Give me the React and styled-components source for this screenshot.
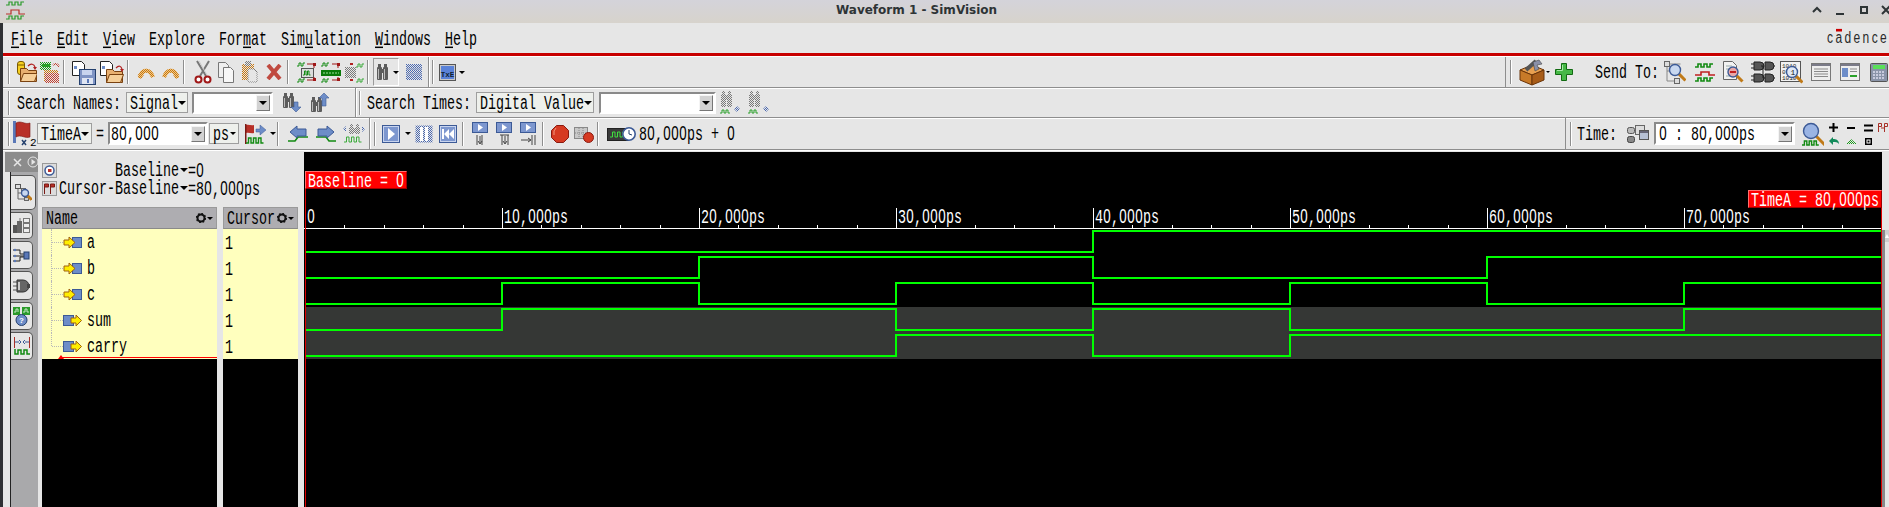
import React from "react";
import styled, { createGlobalStyle } from "styled-components";

const GlobalStyle = createGlobalStyle`
  html, body { margin: 0; padding: 0; background: #000; overflow: hidden; }
  * { box-sizing: border-box; }
`;

const Page = styled.div`
  width: 1889px;
  height: 507px;
  display: flex;
  flex-direction: column;
  overflow: hidden;
  font-family: "Liberation Mono", monospace;
  color: #000;
`;

const TitleBar = styled.div`
  height: 23px;
  flex: none;
  display: flex;
  align-items: center;
  padding: 0 0 3px 6px;
  background: linear-gradient(#d4d3da, #d7d3cc);
`;

const Title = styled.div`
  margin-left: 811px;
  font: bold 12px "DejaVu Sans", sans-serif;
  color: #2e3436;
  white-space: nowrap;
`;

const WinButtons = styled.div`
  margin-left: auto;
  margin-right: -2px;
  display: flex;
  align-items: center;
`;

const Body = styled.div`
  flex: 1;
  min-height: 0;
  display: flex;
  flex-direction: column;
  background: #e6e6e6;
  border-left: 3px solid #2f3034;
`;

const MenuBar = styled.div`
  height: 30px;
  flex: none;
  display: flex;
  align-items: center;
  padding-left: 1px;
`;

const MenuItem = styled.div`
  padding: 0 7px;
  u { text-underline-offset: 1px; text-decoration-thickness: 1px; }
`;

const Logo = styled.div`
  margin-left: auto;
  position: relative;
  width: 62px;
  font: 12px "Liberation Sans", sans-serif;
  letter-spacing: 2.4px;
  color: #2a2a2a;
  white-space: nowrap;
  transform: scaleY(1.3);
`;

const Macron = styled.span`
  position: absolute;
  left: 9px;
  top: 0;
  width: 6px;
  height: 1.5px;
  background: #c00;
`;

const RedRule = styled.div`
  height: 4px;
  flex: none;
  background: #c80000;
  border-bottom: 1px solid #fff;
`;

const ToolRow = styled.div`
  height: ${(p) => p.$h}px;
  flex: none;
  display: flex;
  align-items: center;
  border-bottom: 1px solid #8e8e8e;
  box-shadow: 0 1px 0 #fff;
`;

const Section = styled.div`
  display: flex;
  align-items: center;
  height: 100%;
  flex: none;
  width: ${(p) => p.$w}px;
  border-right: 1px solid #8e8e8e;
  box-shadow: 1px 0 0 #fff;
`;

const RightSection = styled.div`
  display: flex;
  align-items: center;
  height: 100%;
  flex: none;
  margin-left: auto;
  width: ${(p) => p.$w}px;
  border-left: 1px solid #8e8e8e;
`;

const Slot = styled.div`
  flex: none;
  display: flex;
  align-items: center;
  justify-content: center;
  margin-left: ${(p) => p.$ml || 0}px;
  width: ${(p) => (p.$w ? `${p.$w}px` : "auto")};
`;

const Sep = styled.div`
  flex: none;
  margin-left: ${(p) => p.$ml || 0}px;
  width: 2px;
  height: 24px;
  border-left: 1px solid #8e8e8e;
  border-right: 1px solid #fff;
`;

const ActiveButton = styled.div`
  flex: none;
  display: flex;
  align-items: center;
  gap: 1px;
  margin-left: ${(p) => p.$ml || 0}px;
  width: 26px;
  height: 28px;
  padding-left: 3px;
  border: 1px solid;
  border-color: #9a9a9a #fff #fff #9a9a9a;
`;

const Combo = styled.div`
  flex: none;
  display: flex;
  align-items: center;
  justify-content: space-between;
  margin-left: ${(p) => p.$ml || 0}px;
  width: ${(p) => p.$w}px;
  height: 21px;
  padding: 0 2px 0 3px;
  background: #eef0ec;
  border: 1px solid #9e9e9e;
`;

const EditBox = styled.div`
  flex: none;
  display: flex;
  align-items: center;
  margin-left: ${(p) => p.$ml || 0}px;
  width: ${(p) => p.$w}px;
  height: ${(p) => p.$hgt || 22}px;
  padding-left: 1px;
  background: #fff;
  border-style: solid;
  border-width: 2px;
  border-color: #8a8a8a #fff #fff #8a8a8a;
`;

const DropButton = styled.div`
  margin-left: auto;
  width: 14px;
  height: 16px;
  margin-right: 1px;
  display: flex;
  align-items: center;
  justify-content: center;
  background: #d2d2d2;
  border-style: solid;
  border-width: 1px;
  border-color: #f4f4f4 #777 #777 #f4f4f4;
`;

const Caret = styled.span`
  flex: none;
  display: block;
  margin-left: ${(p) => p.$ml || 0}px;
  width: 0;
  height: 0;
  border-left: ${(p) => p.$s || 4}px solid transparent;
  border-right: ${(p) => p.$s || 4}px solid transparent;
  border-top: ${(p) => p.$s || 4}px solid #000;
`;

const TallText = styled.span`
  display: inline-block;
  flex: none;
  white-space: pre;
  line-height: 1;
  font-family: "Liberation Mono", monospace;
  font-size: 13.33px;
  transform: translateY(1.5px) scaleY(1.48);
  color: ${(p) => p.$color || "inherit"};
  margin-left: ${(p) => p.$ml || 0}px;
`;

const Zero = styled.span`
  display: inline-block;
  width: 0.6em;
  text-align: center;
  font-family: "Liberation Sans", sans-serif;
  font-weight: 400;
`;

// Liberation Mono has a dotted zero, the reference font does not
const Tall = ({ text, color, ml }) => (
  <TallText $color={color} $ml={ml}>
    {[...text].map((c, i) => (c === "0" ? <Zero key={i}>0</Zero> : c))}
  </TallText>
);

const Workspace = styled.div`
  flex: 1;
  min-height: 0;
  display: flex;
  padding-top: 2px;
`;

const SideRail = styled.div`
  flex: none;
  width: 33px;
  margin-left: 2px;
  margin-right: 4px;
  display: flex;
  flex-direction: column;
`;

const CloseBar = styled.div`
  height: 20px;
  flex: none;
  display: flex;
  align-items: center;
  gap: 5px;
  padding-left: 8px;
  background: #8c8c8c;
`;

const TabStrip = styled.div`
  flex: 1;
  margin-left: 5px;
  padding-top: 3px;
  display: flex;
  flex-direction: column;
  gap: 2px;
  background: #a9a9ab;
  border-left: 1px solid #222;
`;

const Tab = styled.div`
  height: ${(p) => p.$h}px;
  width: ${(p) => (p.$active ? 25 : 22)}px;
  flex: none;
  display: flex;
  align-items: center;
  justify-content: center;
  background: #e6e6e6;
  border: 1px solid #555;
  border-left: none;
  border-bottom-right-radius: 5px;
  border-top-right-radius: 5px;
`;

const SignalPanel = styled.div`
  flex: none;
  width: ${(p) => p.$w}px;
  margin-right: 6px;
  display: flex;
  flex-direction: column;
`;

const BaselineBox = styled.div`
  height: 55px;
  flex: none;
  padding-top: 9px;
  display: grid;
  grid-template-columns: 17px 120px auto auto;
  grid-auto-rows: 18px;
  align-items: center;
`;

const BaselineLabel = styled.div`
  display: flex;
  justify-content: flex-end;
`;

const BaselineValue = styled.div`
  display: flex;
  align-items: center;
  white-space: pre;
`;

const ColumnHeader = styled.div`
  height: 22px;
  flex: none;
  display: flex;
  align-items: center;
  padding: 0 3px;
  background: #aeadb1;
  border: 1px solid #9a9a9a;
  border-bottom-color: #8a8a8a;
`;

const HeaderTools = styled.div`
  margin-left: auto;
  display: flex;
  align-items: center;
  gap: 1px;
`;

const RowList = styled.div`
  height: 130px;
  flex: none;
  position: relative;
  background: #ffffbe;
`;

const SignalRow = styled.div`
  height: 26px;
  display: flex;
  align-items: center;
`;

const Branch = styled.div`
  flex: none;
  align-self: flex-start;
  margin-left: 9px;
  width: 12px;
  height: ${(p) => (p.$last ? 13 : 26)}px;
  border-left: 1px dotted #b8b8b8;
  position: relative;
  &::after {
    content: "";
    position: absolute;
    left: 0;
    top: 13px;
    width: 11px;
    border-top: 1px dotted #b8b8b8;
  }
`;

const ValueCell = styled.div`
  padding-left: 2px;
`;

const CursorLine = styled.div`
  position: absolute;
  left: 18px;
  right: 0;
  bottom: 1px;
  height: 1px;
  background: #f00;
  &::before {
    content: "";
    position: absolute;
    left: -2px;
    bottom: -1px;
    border-left: 3px solid transparent;
    border-right: 3px solid transparent;
    border-bottom: 4px solid #f00;
  }
`;

const BlackFill = styled.div`
  flex: 1;
  background: #000;
`;

const WaveCanvas = styled.div`
  flex: none;
  width: 1578px;
  position: relative;
  background: #000;
`;

const WaveSvg = styled.svg`
  display: block;
  width: 100%;
  height: 100%;
`;

const TimeLabel = styled.div`
  position: absolute;
  top: 56px;
  left: ${(p) => p.$x}px;
  color: #fff;
  line-height: 16px;
`;

const Flag = styled.div`
  position: absolute;
  top: ${(p) => p.$top}px;
  left: ${(p) => p.$left}px;
  width: ${(p) => p.$w}px;
  height: 18px;
  display: flex;
  align-items: center;
  padding-left: 2px;
  background: #f00;
  border: 1px solid;
  border-color: #ff7070 #a00000 #a00000 #ff7070;
`;

const ScrollColumn = styled.div`
  flex: 1;
  margin-top: 78px;
  border-left: 3px solid #8a8a8a;
`;

const ScrollHead = styled.div`
  height: 12px;
  display: flex;
  align-items: center;
  justify-content: center;
  background: #cfcfcf;
`;

const ScrollUp = styled.span`
  width: 0;
  height: 0;
  border-left: 2px solid transparent;
  border-right: 2px solid transparent;
  border-bottom: 4px solid #fff;
`;

const IconSvg = styled.svg`
  display: block;
  flex: none;
`;

const Defs = styled.svg`
  position: absolute;
  width: 0;
  height: 0;
`;

const Ico = ({ w, h, children }) => (
  <IconSvg width={w} height={h} viewBox={`0 0 ${w} ${h}`}>
    {children}
  </IconSvg>
);

const DITHERS = {
  dOrange: "#c87810",
  dGrey: "#7a7a7a",
  dGreen: "#1a9a1a",
  dBlue: "#4a68b0",
  dRed: "#c04030",
};

const DitherDefs = () => (
  <Defs>
    <defs>
      {Object.entries(DITHERS).map(([id, color]) => (
        <pattern key={id} id={id} width="2" height="2" patternUnits="userSpaceOnUse">
          <rect width="1" height="1" fill={color} />
          <rect x="1" y="1" width="1" height="1" fill={color} />
        </pattern>
      ))}
    </defs>
  </Defs>
);

const squareWave = (x, y, n, w, h) => {
  let d = `M${x} ${y}`;
  for (let i = 0; i < n; i++) d += `h${w}v${i % 2 ? h : -h}`;
  return d + `h${w}`;
};

const Wave = ({ x, y, n = 4, w = 2, h = 3, color = "#128a12", sw = 1 }) => (
  <path d={squareWave(x, y, n, w, h)} fill="none" stroke={color} strokeWidth={sw} />
);

const Folder = ({ x = 0, y = 0 }) => (
  <g transform={`translate(${x} ${y})`}>
    <path d="M.5 2.5h6l2 2h8v11H.5z" fill="#e8b070" stroke="#7a4210" />
    <path d="M.5 15.5l3-8h14l-3 8z" fill="#f6cf98" stroke="#7a4210" />
  </g>
);

const Page2 = ({ x = 0, y = 0, w = 12, h = 14, dot = "#6d8dc8" }) => (
  <g transform={`translate(${x} ${y})`}>
    <path d={`M.5 .5h${w - 4}l3 3v${h - 3}h-${w - 1}z`} fill="#fff" stroke="#222" />
    <rect x="2" y="5" width="3" height="3" fill={dot} />
  </g>
);

const Lens = ({ x, y, r = 5, fill = "#c8d8f0" }) => (
  <g>
    <line x1={x + r * 0.7} y1={y + r * 0.7} x2={x + r * 1.9} y2={y + r * 1.9} stroke="#c07a18" strokeWidth="3" />
    <circle cx={x} cy={y} r={r} fill={fill} stroke="#3c5a96" strokeWidth="1.4" />
  </g>
);

const Binoc = ({ x = 0, y = 0, fill = "#5c5c5c", h = 15 }) => (
  <g transform={`translate(${x} ${y})`}>
    <rect x="1" y="0" width="3" height="4" fill={fill} />
    <rect x="7" y="0" width="3" height="4" fill={fill} />
    <rect x="0" y="3" width="5" height={h - 3} rx="1" fill={fill} />
    <rect x="6" y="3" width="5" height={h - 3} rx="1" fill={fill} />
    <rect x="4" y="5" width="3" height="4" fill={fill} />
    {fill.startsWith("#") && <line x1="1.5" y1="5" x2="1.5" y2={h - 1} stroke="#bbb" />}
    {fill.startsWith("#") && <line x1="7.5" y1="5" x2="7.5" y2={h - 1} stroke="#bbb" />}
  </g>
);

const BlueBtn = ({ w = 18, h = 18, fill = "#7d97cf", children }) => (
  <Ico w={w} h={h}>
    <rect x=".5" y=".5" width={w - 1} height={h - 1} fill={fill} stroke={fill.startsWith("#") ? "#3c5a96" : "none"} />
    {fill.startsWith("#") && <rect x="1.5" y="1.5" width={w - 3} height={h - 3} fill="none" stroke="#c8d4ee" />}
    {children}
  </Ico>
);

const OpenDbIcon = () => (
  <Ico w={21} h={24}>
    <rect x="1.5" y="1.5" width="7" height="13" rx="2.5" fill="#f6d020" stroke="#7a5a00" />
    <line x1="2" y1="5" x2="8" y2="5" stroke="#7a5a00" />
    <Folder x={4} y={6} />
    <path d="M12 6c3-3 6-2 7 1" fill="none" stroke="#b02020" strokeWidth="1.2" />
    <path d="M17 7h4l-2 3z" fill="#b02020" />
  </Ico>
);

const OpenWaveIcon = () => (
  <Ico w={20} h={24}>
    <rect x="0" y="2" width="11" height="8" fill="url(#dGreen)" />
    <rect x="2" y="4" width="8" height="3" fill="#28a028" />
    <rect x="4" y="10" width="14" height="12" fill="url(#dOrange)" />
    <rect x="5" y="13" width="14" height="10" fill="url(#dRed)" />
    <path d="M13 5c3-2 5-1 6 2" fill="none" stroke="url(#dRed)" strokeWidth="2" />
  </Ico>
);

const SaveIcon = () => (
  <Ico w={24} h={25}>
    <Page2 x={0} y={1} w={13} h={14} />
    <rect x="7.5" y="9.5" width="16" height="15" fill="#7f94c4" stroke="#24406e" />
    <rect x="10" y="10" width="10" height="5" fill="#c8d4ee" />
    <rect x="10" y="18" width="11" height="6" fill="#dfe5f2" />
    <rect x="15" y="19" width="2" height="4" fill="#5a78b8" />
  </Ico>
);

const CopyFolderIcon = () => (
  <Ico w={24} h={25}>
    <Page2 x={0} y={1} w={13} h={14} />
    <g transform="translate(6 7)">
      <Folder />
    </g>
    <path d="M16 8c3-3 5-2 6 1" fill="none" stroke="#b02020" strokeWidth="1.2" />
    <path d="M20 9h4l-2 3z" fill="#b02020" />
  </Ico>
);

const UndoIcon = ({ flip }) => (
  <Ico w={18} h={15}>
    <g transform={flip ? "translate(18 0) scale(-1 1)" : undefined}>
      <path d="M3 13C4 5 12 2 16 12" fill="none" stroke="#f0c888" strokeWidth="4" />
      <path d="M3 13C4 5 12 2 16 12" fill="none" stroke="url(#dOrange)" strokeWidth="4" />
      <path d="M0 9l3 5 4-4z" fill="url(#dOrange)" />
    </g>
  </Ico>
);

const CutIcon = () => (
  <Ico w={18} h={24}>
    <path d="M3 1l9 15M15 1L6 16" fill="none" stroke="#777" strokeWidth="2" />
    <path d="M5 1l8 14" stroke="#ccc" fill="none" />
    <circle cx="4.5" cy="19.5" r="3" fill="#fff" stroke="#a01818" strokeWidth="2" />
    <circle cx="13.5" cy="19.5" r="3" fill="#fff" stroke="#a01818" strokeWidth="2" />
  </Ico>
);

const CopyIcon = () => (
  <Ico w={16} h={21}>
    <path d="M.5 .5h7l3 3v12H.5z" fill="#efefef" stroke="#777" />
    <path d="M5.5 5.5h7l3 3v12h-10z" fill="#f7f7f7" stroke="#777" />
  </Ico>
);

const PasteIcon = () => (
  <Ico w={16} h={22}>
    <rect x="0" y="3" width="12" height="16" fill="url(#dOrange)" />
    <rect x="3" y="0" width="6" height="5" fill="url(#dGrey)" />
    <path d="M6 8h6l3 3v10H6z" fill="#e6e6e6" stroke="url(#dGrey)" />
  </Ico>
);

const DeleteIcon = () => (
  <Ico w={16} h={16}>
    <path d="M2 1l12 14M14 1L2 15" stroke="#c04a40" strokeWidth="4" fill="none" />
  </Ico>
);

const WaveBoxIcon = () => (
  <Ico w={22} h={21}>
    <Wave x={1} y={4} n={3} />
    <Wave x={1} y={20} n={3} />
    <rect x="5.5" y="6.5" width="12" height="9" fill="#dcdcdc" stroke="#555" />
    <Wave x={7} y={13} n={4} w={1.5} h={4} />
    <path d="M11 2h7v4M11 18h7v-3" stroke="#a01818" fill="none" />
    <rect x="17" y="1" width="3" height="3" fill="#a01818" />
    <rect x="17" y="16" width="3" height="3" fill="#a01818" />
  </Ico>
);

const WaveBusIcon = () => (
  <Ico w={22} h={21}>
    <Wave x={1} y={4} n={3} />
    <Wave x={1} y={20} n={3} />
    <rect x="1" y="8" width="20" height="6" fill="#0a7a0a" />
    <path d="M3 11h16" stroke="#9ce09c" strokeDasharray="2 1" />
    <path d="M12 2h6v4M12 18h6v-3" stroke="#a01818" fill="none" />
    <rect x="17" y="1" width="3" height="3" fill="#a01818" />
    <rect x="17" y="16" width="3" height="3" fill="#a01818" />
  </Ico>
);

const WaveDimIcon = () => (
  <Ico w={20} h={21}>
    <rect x="1" y="5" width="11" height="11" fill="url(#dGrey)" />
    <path d="M6 2h3M6 18h3" stroke="#b02020" strokeWidth="2" />
    <Wave x={12} y={5} n={3} w={2} color="#3aaa3a" />
    <Wave x={12} y={20} n={3} w={2} color="#3aaa3a" />
  </Ico>
);

const FindIcon = () => (
  <Ico w={15} h={16}>
    <Binoc y={0} h={16} />
  </Ico>
);

const GridIcon = () => (
  <Ico w={16} h={16}>
    <rect width="16" height="16" fill="url(#dBlue)" />
    <path d="M0 5h16M0 10h16" stroke="#9aa8c8" />
  </Ico>
);

const TxEIcon = () => (
  <IconSvg width={17} height={17} viewBox="0 0 17 17">
    <rect x=".5" y=".5" width="16" height="16" fill="#c8c8c8" stroke="#555" />
    <rect x="2" y="2" width="13" height="13" fill="#5a82d8" />
    <text x="8.5" y="12.5" textAnchor="middle" fontSize="7.5" fontFamily="Liberation Mono" fontWeight="700" fill="#123">TxE</text>
  </IconSvg>
);

const BinocDownIcon = ({ up }) => (
  <Ico w={18} h={19}>
    <Binoc y={up ? 4 : 0} h={15} />
    <path d={up ? "M13 0l5 5h-3v8h-4V5H8z" : "M11 9h4v5h3l-5 5-5-5h3z"} fill="#6d8dc8" stroke="#3c5a96" strokeWidth=".6" />
  </Ico>
);

const BinocDimIcon = ({ flip }) => (
  <Ico w={22} h={24}>
    <Binoc x={1} fill="url(#dGrey)" h={16} />
    <Wave x={0} y={22} n={4} w={2} color="#2aa02a" />
    <path d={flip ? "M15 18l3 3 3-3-3-3z" : "M14 18l3 3 3-3-3-3z"} fill="url(#dBlue)" />
  </Ico>
);

const FlagIcon = () => (
  <IconSvg width={24} height={27} viewBox="0 0 24 27">
    <rect x="0" y="1" width="3" height="22" fill="#5a78b8" />
    <path d="M3 3c5-3 9 2 14 0v14c-5 2-9-3-14 0z" fill="#b83028" stroke="#7a1a14" strokeWidth=".6" />
    <path d="M9 20l4 5M13 20l-4 5" stroke="#24406e" strokeWidth="1.5" />
    <text x="17" y="26" fontSize="11" fontFamily="Liberation Mono" fill="#000">2</text>
  </IconSvg>
);

const MarkerWaveIcon = () => (
  <Ico w={23} h={22}>
    <path d="M2 2c3-1 5 1 8 0v8c-3 1-5-1-8 0z" fill="#b83028" />
    <rect x="1" y="1" width="1.5" height="20" fill="#7a1a14" />
    <path d="M12 6h4V2l6 5-6 5V9h-4z" fill="#6d8dc8" stroke="#3c5a96" strokeWidth=".5" />
    <Wave x={2} y={20} n={6} w={2.5} h={5} color="#128a12" sw={1.4} />
  </Ico>
);

const EdgeArrowIcon = ({ right }) => (
  <Ico w={20} h={18}>
    <g transform={right ? "translate(20 0) scale(-1 1)" : undefined}>
      <path d="M0 16h7l3-4h10" fill="none" stroke="#128a12" strokeWidth="1.6" />
      <path d="M2 7l7-6v3h9v7H9v2z" fill="#6d8dc8" stroke="#3c5a96" />
    </g>
  </Ico>
);

const EdgeDimIcon = () => (
  <Ico w={22} h={20}>
    <Binoc x={6} fill="url(#dGrey)" h={10} />
    <path d="M0 5l3-3v6zM22 5l-3-3v6z" fill="url(#dBlue)" />
    <Wave x={1} y={18} n={6} w={2.5} h={5} color="#3aaa3a" />
  </Ico>
);

const PlayIcon = () => (
  <BlueBtn>
    <path d="M6 3l7 6-7 6z" fill="#fff" />
  </BlueBtn>
);

const PauseIcon = () => (
  <BlueBtn fill="url(#dBlue)">
    <rect x="5" y="2" width="3" height="14" fill="#fff" />
    <rect x="10" y="2" width="3" height="14" fill="#fff" />
  </BlueBtn>
);

const RewindIcon = () => (
  <BlueBtn>
    <rect x="3" y="4" width="2" height="10" fill="#fff" />
    <path d="M10 4l-5 5 5 5zM15 4l-5 5 5 5z" fill="#fff" />
  </BlueBtn>
);

const StepIcon = ({ kind }) => (
  <Ico w={16} h={24}>
    <rect x=".5" y=".5" width="15" height="10" fill="#7d97cf" stroke="#3c5a96" />
    <path d="M6 2l5 3.5L6 9z" fill="#fff" />
    {kind === 0 && <path d="M5 13v10M10 13v10M8 14v7M6 19l2 3 2-3" stroke="#444" fill="none" />}
    {kind === 1 && <path d="M4 13h9M6 13v10M12 13v10M9 14v7M7 19l2 3 2-3" stroke="#444" fill="none" />}
    {kind === 2 && <path d="M1 18h9M8 16l3 2-3 2M12 13v10M15 13v10" stroke="#444" fill="none" />}
  </Ico>
);

const RecordIcon = () => (
  <Ico w={18} h={18}>
    <path d="M5.5 .5h7l5 5v7l-5 5h-7l-5-5v-7z" fill="#d63a22" stroke="#8a1a10" />
    <path d="M5 3l-2 3v4" stroke="#f09a80" fill="none" />
  </Ico>
);

const RecordDimIcon = () => (
  <Ico w={20} h={18}>
    <rect x=".5" y="2.5" width="13" height="11" fill="#c8c8c8" stroke="#888" />
    <path d="M5 3v10M9 3v10M1 8h12" stroke="#888" strokeDasharray="1 1" />
    <circle cx="14.5" cy="12.5" r="5" fill="#d63a22" stroke="#8a1a10" />
  </Ico>
);

const ClockWaveIcon = () => (
  <Ico w={29} h={16}>
    <rect x=".5" y="2.5" width="21" height="12" fill="#3a3a3a" stroke="#222" />
    <Wave x={3} y={11} n={5} w={2.5} h={5} color="#3fe03f" />
    <circle cx="22" cy="8" r="6.2" fill="#fff" stroke="#3c5a96" strokeWidth="1.6" />
    <path d="M22 4v4l3 1" stroke="#24406e" fill="none" />
  </Ico>
);

const ToolBoxIcon = () => (
  <Ico w={26} h={27}>
    <path d="M1 11l12-5 12 5-12 5z" fill="#e8a050" stroke="#6a3408" />
    <path d="M1 11v10l12 5V16z" fill="#c87a28" stroke="#6a3408" />
    <path d="M25 11v10l-12 5V16z" fill="#a85c18" stroke="#6a3408" />
    <path d="M7 11L17 2" stroke="#555" strokeWidth="4" />
    <path d="M14 3l6-2 3 4-5 1 2 4-4 2z" fill="#8a90a8" stroke="#444" strokeWidth=".6" />
  </Ico>
);

const PlusIcon = () => (
  <Ico w={18} h={18}>
    <path d="M6.5 .5h5v6h6v5h-6v6h-5v-6h-6v-5h6z" fill="#46b846" stroke="#126a12" />
    <path d="M7.5 2v5.500H2" fill="none" stroke="#a8e8a8" />
  </Ico>
);

const TreeLensIcon = () => (
  <Ico w={22} h={23}>
    <rect x=".5" y=".5" width="5" height="5" fill="#ddd" stroke="#666" />
    <rect x="10.5" y="17.5" width="5" height="5" fill="#ddd" stroke="#666" />
    <path d="M3 6v14h7M3 10h3" stroke="#888" fill="none" />
    <rect x="5.500" y="2.500" width="11" height="1" fill="#888" />
    <Lens x={11} y={9} r={5.5} />
  </Ico>
);

const RedGreenWaveIcon = () => (
  <Ico w={20} h={20}>
    <Wave x={0} y={5} n={5} w={3} h={3} sw={1.6} />
    <path d="M0 13h6v-3h8v3h6" fill="none" stroke="#c02020" strokeWidth="1.6" />
    <Wave x={0} y={19} n={5} w={3} h={3} sw={1.6} />
  </Ico>
);

const DocLensIcon = () => (
  <Ico w={22} h={22}>
    <path d="M.5 .5h9l4 4v14H.5z" fill="#f2f2f2" stroke="#666" />
    <path d="M3 5h6M3 8h6M3 15h6" stroke="#9aa" />
    <Lens x={10} y={11} r={5} fill="#e8a8a8" />
    <rect x="7" y="10" width="6" height="2" fill="#c02020" />
  </Ico>
);

const GatesIcon = () => (
  <Ico w={24} h={22}>
    <path d="M3 1h6a4 4 0 0 1 0 8H3zM14 1h5a4 4 0 0 1 0 8h-5zM3 13h6a4 4 0 0 1 0 8H3zM14 13h5a4 4 0 0 1 0 8h-5z" fill="#555" stroke="#222" />
    <path d="M0 3h3M0 7h3M13 5h-3M0 15h3M0 19h3M12 17h2M12 5v12M23 5h1M23 17h1" stroke="#222" fill="none" />
  </Ico>
);

const BitsLensIcon = () => (
  <IconSvg width={23} height={23} viewBox="0 0 23 23">
    <rect x=".5" y=".5" width="20" height="20" fill="#f2f2f2" stroke="#555" />
    <text x="2" y="7" fontSize="6" fontFamily="Liberation Mono" fill="#222">1010</text>
    <text x="2" y="13" fontSize="6" fontFamily="Liberation Mono" fill="#222">0</text>
    <text x="2" y="19" fontSize="6" fontFamily="Liberation Mono" fill="#222">1010</text>
    <Lens x={12} y={11} r={5.5} fill="#dfe8f6" />
    <text x="10.500" y="14" fontSize="8" fontFamily="Liberation Mono" fill="#111">1</text>
  </IconSvg>
);

const ListWinIcon = () => (
  <Ico w={20} h={18}>
    <rect x=".5" y=".5" width="19" height="17" fill="#eee" stroke="#777" />
    <rect x="1" y="1" width="18" height="2" fill="#7a7a88" />
    <path d="M3 6h14M3 8.500h14M3 11h14M3 13.500h14" stroke="#8a8a8a" />
  </Ico>
);

const SplitWinIcon = () => (
  <Ico w={20} h={18}>
    <rect x=".5" y=".5" width="19" height="17" fill="#eee" stroke="#777" />
    <rect x="1" y="1" width="18" height="2" fill="#7a7a88" />
    <rect x="2" y="5" width="6" height="9" fill="#6d8dc8" />
    <path d="M10 6h7M10 8.500h7" stroke="#8a8a8a" />
    <path d="M10 13h7" stroke="#28a028" strokeWidth="2" />
  </Ico>
);

const CalcIcon = () => (
  <Ico w={18} h={19}>
    <rect x=".5" y=".5" width="17" height="18" rx="1" fill="#8a94a8" stroke="#555" />
    <rect x="3" y="2" width="12" height="4" fill="#5ae05a" />
    <path d="M3 9h12M3 12h12M3 15h12" stroke="#dde" strokeWidth="1.5" strokeDasharray="2 1" />
  </Ico>
);

const TimeWinIcon = () => (
  <Ico w={22} h={18}>
    <rect x=".5" y="2.500" width="7" height="6" rx="2" fill="#bbb" stroke="#555" />
    <rect x=".5" y="11.500" width="7" height="6" rx="2" fill="#888" stroke="#444" />
    <rect x="8.500" y=".5" width="9" height="9" fill="#ddd" stroke="#666" />
    <rect x="12.500" y="5.500" width="9" height="9" fill="#b6c0d4" stroke="#555" />
    <rect x="13" y="6" width="8" height="2" fill="#667" />
  </Ico>
);

const ZoomLensIcon = () => (
  <Ico w={22} h={24}>
    <Lens x={9} y={9} r={7.5} fill="#9ab4e4" />
    <Wave x={0} y={23} n={6} w={2.4} h={4} color="#128a12" sw={1.4} />
  </Ico>
);

const ZoomGlyphs = styled.div`
  display: grid;
  flex: none;
  grid-template-columns: 18px 18px 17px 12px;
  grid-template-rows: 15px 12px;
  justify-items: center;
  align-items: center;
  width: 65px;
`;

const Bar = styled.span`
  display: block;
  width: ${(p) => p.$w || 8}px;
  height: 2px;
  background: #000;
`;

const PlusGlyph = () => (
  <Ico w={9} h={9}>
    <path d="M0 4.500h9M4.500 0v9" stroke="#000" strokeWidth="2" />
  </Ico>
);

const EqGlyph = () => (
  <Ico w={9} h={8}>
    <path d="M0 1.500h9M0 6.500h9" stroke="#000" strokeWidth="2" />
  </Ico>
);

const RedMarks = () => (
  <Ico w={10} h={9}>
    <path d="M.5 9V.5h3v3h-3M6.500 9V.5h3v3h-3M3 5h4" stroke="#a83028" fill="none" />
  </Ico>
);

const BackGlyph = () => (
  <Ico w={11} h={8}>
    <path d="M1 4l4-4v2c3 0 6 1 6 5-2-2-3-2-6-2v3z" fill="#128a5a" />
  </Ico>
);

const HatchGlyph = () => (
  <Ico w={11} h={7}>
    <path d="M0 6l5-5 6 5z" fill="url(#dGreen)" />
  </Ico>
);

const SquareGlyph = () => (
  <Ico w={7} h={7}>
    <rect x=".75" y=".75" width="5.500" height="5.500" fill="#fff" stroke="#000" strokeWidth="1.500" />
    <rect x="2.500" y="2.500" width="2" height="2" fill="#000" />
  </Ico>
);

const AppIcon = () => (
  <Ico w={19} h={20}>
    <Wave x={0} y={5} n={5} w={3} h={3} color="#2a9a2a" sw={1.2} />
    <path d="M0 14h5v-4h8v4h6" fill="none" stroke="#b83028" strokeWidth="1.2" />
    <Wave x={0} y={19} n={5} w={3} h={3} color="#2a9a2a" sw={1.2} />
  </Ico>
);

const WinGlyph = ({ d, ml, sw = 2 }) => (
  <Slot $ml={ml}>
    <Ico w={10} h={10}>
      <path d={d} fill="none" stroke="#2e3436" strokeWidth={sw} />
    </Ico>
  </Slot>
);

const CloseGlyph = () => (
  <Ico w={9} h={9}>
    <path d="M1 1l7 7M8 1L1 8" stroke="#e6e6e6" strokeWidth="1.500" />
  </Ico>
);

const UndockGlyph = () => (
  <Ico w={12} h={12}>
    <circle cx="6" cy="6" r="5" fill="none" stroke="#e6e6e6" />
    <path d="M4.500 3l4 3-4 3z" fill="#e6e6e6" />
  </Ico>
);

const SmallBtn = ({ children }) => (
  <Ico w={15} h={15}>
    <rect x=".5" y=".5" width="14" height="14" fill="#dcdcdc" stroke="#999" />
    {children}
  </Ico>
);

const TabHierarchy = () => (
  <Ico w={17} h={18}>
    <rect x=".5" y=".5" width="5" height="4" fill="#ddd" stroke="#555" />
    <path d="M3 5v10h7M3 9h4" stroke="#666" fill="none" />
    <rect x="6.500" y="4.500" width="4" height="3" fill="#ccc" stroke="#666" />
    <rect x="9.500" y="13.500" width="4" height="3" fill="#ccc" stroke="#666" />
    <Lens x={10} y={9} r={3.5} />
  </Ico>
);

const TabBars = () => (
  <Ico w={17} h={15}>
    <rect x="0" y="7" width="5" height="8" fill="#555" />
    <rect x="4" y="3" width="5" height="12" fill="#666" />
    <rect x="10.500" y=".5" width="6" height="4" fill="#eee" stroke="#777" />
    <rect x="10.500" y="5.500" width="6" height="4" fill="#eee" stroke="#777" />
    <rect x="10.500" y="10.500" width="6" height="4" fill="#eee" stroke="#777" />
    <line x1="7" y1="0" x2="7" y2="3" stroke="#777" />
  </Ico>
);

const TabBus = () => (
  <Ico w={17} h={15}>
    <path d="M0 2h7v4h5M0 8h12M0 13h7V9h5" stroke="#222" fill="none" />
    <circle cx="2" cy="2" r="1.200" fill="#5a78b8" />
    <circle cx="2" cy="8" r="1.200" fill="#5a78b8" />
    <circle cx="2" cy="13" r="1.200" fill="#5a78b8" />
    <rect x="11" y="4" width="5" height="7" fill="#5a78b8" stroke="#24406e" />
  </Ico>
);

const TabPlug = () => (
  <Ico w={17} h={14}>
    <path d="M0 3h5M0 7h5M0 11h5" stroke="#555" />
    <path d="M4 1h6a6 6 0 0 1 0 12H4z" fill="#666" stroke="#333" />
    <rect x="5" y="3" width="2" height="8" fill="#ccc" />
    <rect x="14" y="5" width="3" height="4" fill="#444" />
  </Ico>
);

const TabQuery = () => (
  <IconSvg width={17} height={19} viewBox="0 0 17 19">
    <rect x="0" y="0" width="7" height="8" fill="#2a9a2a" />
    <rect x="9" y="0" width="8" height="8" fill="#2a9a2a" />
    <path d="M1 5h2V2h2v3M10 5h2V2h2v3h2" stroke="#c8e8c8" fill="none" />
    <circle cx="8.500" cy="13" r="5.500" fill="#6d8dc8" stroke="#24406e" />
    <text x="8.500" y="16" textAnchor="middle" fontSize="8" fontWeight="700" fontFamily="Liberation Sans" fill="#fff">?</text>
  </IconSvg>
);

const TabCompare = () => (
  <Ico w={16} h={19}>
    <path d="M.5 0v11M15.500 0v11" stroke="#a83028" />
    <path d="M1 5h4M5 3l2 2-2 2M15 5h-4M11 3L9 5l2 2" stroke="#3c5a96" fill="none" />
    <path d="M1 12v5h3v-4h3v4h3v-4h3v4h3" stroke="#128a12" strokeWidth="1.500" fill="none" />
  </Ico>
);

const InputPort = () => (
  <Ico w={19} h={13}>
    <rect x="9.500" y="1.500" width="9" height="10" fill="#6d8dc8" stroke="#3c5a96" />
    <path d="M1 4h5V1l6 5.500L6 12V9H1z" fill="#ffee00" stroke="#a06010" />
  </Ico>
);

const OutputPort = () => (
  <Ico w={19} h={13}>
    <rect x=".5" y="1.500" width="10" height="10" fill="#6d8dc8" stroke="#3c5a96" />
    <path d="M8 4h5V1l5.500 5.500L13 12V9H8z" fill="#ffee00" stroke="#a06010" />
  </Ico>
);

const GearMenu = () => (
  <HeaderTools>
    <Ico w={10} h={10}>
      <circle cx="5" cy="5" r="3.500" fill="none" stroke="#111" strokeWidth="2" />
      <circle cx="5" cy="5" r="4.500" fill="none" stroke="#111" strokeWidth="1.400" strokeDasharray="1.700 1.800" />
    </Ico>
    <Caret $s={3.5} />
  </HeaderTools>
);

const MENU = [
  ["", "F", "ile"],
  ["", "E", "dit"],
  ["", "V", "iew"],
  ["Explore", "", ""],
  ["For", "m", "at"],
  ["Sim", "u", "lation"],
  ["", "W", "indows"],
  ["", "H", "elp"],
];

const SIGNALS = [
  { name: "a", dir: "in", edges: [0, 0, 0, 0, 1, 1, 1, 1] },
  { name: "b", dir: "in", edges: [0, 0, 1, 1, 0, 0, 1, 1] },
  { name: "c", dir: "in", edges: [0, 1, 0, 1, 0, 1, 0, 1] },
  { name: "sum", dir: "out", edges: [0, 1, 1, 0, 1, 0, 0, 1] },
  { name: "carry", dir: "out", edges: [0, 0, 0, 1, 0, 1, 1, 1] },
];

const X0 = 305;
const STEP = 197;

const wavePath = (edges, row) => {
  const hi = 231 + row * 26;
  const lo = 252 + row * 26;
  let d = `M${X0} ${edges[0] ? hi : lo}`;
  edges.forEach((v, i) => {
    const x = X0 + i * STEP;
    d += `L${x} ${v ? hi : lo}L${x + STEP} ${v ? hi : lo}`;
  });
  return d;
};

const minorTicks = [];
for (let i = 1; i < 40; i++) {
  if (i % 5) minorTicks.push(X0 + (i * STEP) / 5);
}

const MARKS = [1, 2, 3, 4, 5, 6, 7];

const Waveforms = () => (
  <WaveCanvas>
    <WaveSvg viewBox="304 152 1578 355" preserveAspectRatio="none">
      <rect x="305" y="307" width="1576" height="52" fill="#353735" />
      <line x1="304" y1="228.500" x2="1881" y2="228.500" stroke="#fff" />
      {minorTicks.map((x) => (
        <line key={x} x1={Math.round(x) + 0.5} y1="225" x2={Math.round(x) + 0.5} y2="228" stroke="#fff" />
      ))}
      {MARKS.map((m) => (
        <line key={m} x1={X0 + m * STEP + 0.5} y1="208" x2={X0 + m * STEP + 0.5} y2="228" stroke="#fff" />
      ))}
      {SIGNALS.map((s, i) => (
        <path key={s.name} d={wavePath(s.edges, i)} fill="none" stroke="#00ff00" strokeWidth="2" shapeRendering="crispEdges" />
      ))}
      <line x1="305.500" y1="189" x2="305.500" y2="507" stroke="#e00000" />
      <line x1="1881.500" y1="208" x2="1881.500" y2="507" stroke="#e00000" />
    </WaveSvg>
    <Flag $top={19} $left={1} $w={102}>
      <Tall text="Baseline = 0" color="#fff" />
    </Flag>
    <Flag $top={38} $left={1444} $w={134}>
      <Tall text="TimeA = 80,000ps" color="#fff" />
    </Flag>
    <TimeLabel $x={3}>
      <Tall text="0" />
    </TimeLabel>
    {MARKS.map((m) => (
      <TimeLabel key={m} $x={X0 - 304 + m * STEP + 2}>
        <Tall text={`${m}0,000ps`} />
      </TimeLabel>
    ))}
  </WaveCanvas>
);

const App = () => (
  <Page>
    <GlobalStyle />
    <DitherDefs />
    <TitleBar>
      <AppIcon />
      <Title>Waveform 1 - SimVision</Title>
      <WinButtons>
        <WinGlyph d="M1 7l4-4 4 4" />
        <WinGlyph ml={13} d="M1 9h8" />
        <WinGlyph ml={14} d="M2 2h6v6H2z" />
        <WinGlyph ml={12} d="M1 1l8 8M9 1l-8 8" />
      </WinButtons>
    </TitleBar>
    <Body>
      <MenuBar>
        {MENU.map(([a, u, b]) => (
          <MenuItem key={a + u + b}>
            <TallText>
              {a}
              {u && <u>{u}</u>}
              {b}
            </TallText>
          </MenuItem>
        ))}
        <Logo>
          <Macron />
          cadence
        </Logo>
      </MenuBar>
      <RedRule />

      <ToolRow $h={31}>
        <Section $w={426}>
          <Sep $ml={5} />
          <Slot $ml={6} $w={20}><OpenDbIcon /></Slot>
          <Slot $ml={4} $w={20}><OpenWaveIcon /></Slot>
          <Sep $ml={3} />
          <Slot $ml={7} $w={24}><SaveIcon /></Slot>
          <Slot $ml={4} $w={24}><CopyFolderIcon /></Slot>
          <Sep $ml={3} />
          <Slot $ml={8} $w={18}><UndoIcon /></Slot>
          <Slot $ml={7} $w={18}><UndoIcon flip /></Slot>
          <Sep $ml={3} />
          <Slot $ml={9} $w={18}><CutIcon /></Slot>
          <Slot $ml={6} $w={16}><CopyIcon /></Slot>
          <Slot $ml={8} $w={16}><PasteIcon /></Slot>
          <Slot $ml={8} $w={15}><DeleteIcon /></Slot>
          <Sep $ml={6} />
          <Slot $ml={7} $w={22}><WaveBoxIcon /></Slot>
          <Slot $ml={2} $w={22}><WaveBusIcon /></Slot>
          <Slot $ml={2} $w={20}><WaveDimIcon /></Slot>
          <Sep $ml={3} />
          <ActiveButton $ml={4}>
            <FindIcon />
            <Caret $s={3} />
          </ActiveButton>
          <Slot $ml={7} $w={16}><GridIcon /></Slot>
        </Section>
        <Sep $ml={3} />
        <Slot $ml={5} $w={17}><TxEIcon /></Slot>
        <Caret $ml={3} $s={3} />
        <RightSection $w={384}>
          <Sep $ml={4} />
          <Slot $ml={7} $w={26}><ToolBoxIcon /></Slot>
          <Caret $ml={1} $s={2.5} />
          <Slot $ml={5} $w={18}><PlusIcon /></Slot>
          <Tall text="Send To:" ml={22} />
          <Slot $ml={5} $w={22}><TreeLensIcon /></Slot>
          <Slot $ml={9} $w={20}><RedGreenWaveIcon /></Slot>
          <Slot $ml={8} $w={22}><DocLensIcon /></Slot>
          <Slot $ml={6} $w={24}><GatesIcon /></Slot>
          <Slot $ml={5} $w={23}><BitsLensIcon /></Slot>
          <Slot $ml={8} $w={20}><ListWinIcon /></Slot>
          <Slot $ml={9} $w={20}><SplitWinIcon /></Slot>
          <Slot $ml={10} $w={18}><CalcIcon /></Slot>
        </RightSection>
      </ToolRow>

      <ToolRow $h={30}>
        <Section $w={353}>
          <Sep $ml={5} />
          <Tall text="Search Names:" ml={7} />
          <Combo $ml={5} $w={62}>
            <Tall text="Signal" />
            <Caret />
          </Combo>
          <EditBox $ml={4} $w={81}>
            <DropButton><Caret /></DropButton>
          </EditBox>
          <Slot $ml={10} $w={18}><BinocDownIcon /></Slot>
          <Slot $ml={10} $w={18}><BinocDownIcon up /></Slot>
        </Section>
        <Sep $ml={3} />
        <Tall text="Search Times:" ml={6} />
        <Combo $ml={5} $w={118}>
          <Tall text="Digital Value" />
          <Caret />
        </Combo>
        <EditBox $ml={5} $w={117}>
          <DropButton><Caret /></DropButton>
        </EditBox>
        <Slot $ml={4} $w={22}><BinocDimIcon /></Slot>
        <Slot $ml={6} $w={22}><BinocDimIcon flip /></Slot>
      </ToolRow>

      <ToolRow $h={32}>
        <Section $w={367}>
          <Sep $ml={5} />
          <Slot $ml={3} $w={24}><FlagIcon /></Slot>
          <Combo $w={55}>
            <Tall text="TimeA" />
            <Caret />
          </Combo>
          <Tall text="=" ml={4} />
          <EditBox $ml={4} $w={100} $hgt={23}>
            <Tall text="80,000" />
            <DropButton><Caret /></DropButton>
          </EditBox>
          <Combo $ml={1} $w={30}>
            <Tall text="ps" />
            <Caret $s={3} />
          </Combo>
          <Slot $ml={5} $w={23}><MarkerWaveIcon /></Slot>
          <Caret $ml={3} $s={3} />
          <Sep $ml={1} />
          <Slot $ml={9} $w={20}><EdgeArrowIcon /></Slot>
          <Slot $ml={8} $w={20}><EdgeArrowIcon right /></Slot>
          <Slot $ml={7} $w={22}><EdgeDimIcon /></Slot>
        </Section>
        <Sep $ml={4} />
        <Slot $ml={6} $w={18}><PlayIcon /></Slot>
        <Caret $ml={5} $s={3} />
        <Slot $ml={4} $w={18}><PauseIcon /></Slot>
        <Slot $ml={6} $w={18}><RewindIcon /></Slot>
        <Sep $ml={5} />
        <Slot $ml={8} $w={16}><StepIcon kind={0} /></Slot>
        <Slot $ml={8} $w={16}><StepIcon kind={1} /></Slot>
        <Slot $ml={8} $w={16}><StepIcon kind={2} /></Slot>
        <Sep $ml={6} />
        <Slot $ml={7} $w={18}><RecordIcon /></Slot>
        <Slot $ml={5} $w={20}><RecordDimIcon /></Slot>
        <Sep $ml={3} />
        <Slot $ml={8} $w={29}><ClockWaveIcon /></Slot>
        <Tall text="80,000ps + 0" ml={3} />
        <RightSection $w={324}>
          <Sep $ml={4} />
          <Tall text="Time:" ml={5} />
          <Slot $ml={10} $w={22}><TimeWinIcon /></Slot>
          <EditBox $ml={5} $w={141} $hgt={23}>
            <Tall text="0 : 80,000ps" ml={2} />
            <DropButton><Caret /></DropButton>
          </EditBox>
          <Slot $ml={7} $w={22}><ZoomLensIcon /></Slot>
          <ZoomGlyphs>
            <PlusGlyph />
            <Bar />
            <EqGlyph />
            <RedMarks />
            <BackGlyph />
            <HatchGlyph />
            <SquareGlyph />
          </ZoomGlyphs>
        </RightSection>
      </ToolRow>

      <Workspace>
        <SideRail>
          <CloseBar>
            <CloseGlyph />
            <UndockGlyph />
          </CloseBar>
          <TabStrip>
            <Tab $active $h={35}><TabHierarchy /></Tab>
            <Tab $h={27}><TabBars /></Tab>
            <Tab $h={28}><TabBus /></Tab>
            <Tab $h={29}><TabPlug /></Tab>
            <Tab $h={28}><TabQuery /></Tab>
            <Tab $h={28}><TabCompare /></Tab>
          </TabStrip>
        </SideRail>

        <SignalPanel $w={175}>
          <BaselineBox>
            <SmallBtn>
              <circle cx="7.500" cy="7.500" r="4.500" fill="#fff" stroke="#3c5a96" strokeWidth="1.500" />
              <rect x="6" y="6" width="3.500" height="3" fill="#b83028" />
            </SmallBtn>
            <BaselineLabel><Tall text="Baseline" /></BaselineLabel>
            <Caret $ml={1} />
            <BaselineValue><Tall text="=0" /></BaselineValue>
            <SmallBtn>
              <path d="M2.500 13V3h4v3h-4M8.500 13V3h4v3h-4" fill="#b83028" stroke="#7a1a14" />
            </SmallBtn>
            <BaselineLabel><Tall text="Cursor-Baseline" /></BaselineLabel>
            <Caret $ml={1} />
            <BaselineValue><Tall text="=80,000ps" /></BaselineValue>
          </BaselineBox>
          <ColumnHeader>
            <Tall text="Name" />
            <GearMenu />
          </ColumnHeader>
          <RowList>
            {SIGNALS.map((s, i) => (
              <SignalRow key={s.name}>
                <Branch $last={i === SIGNALS.length - 1} />
                {s.dir === "in" ? <InputPort /> : <OutputPort />}
                <Tall text={s.name} ml={5} />
              </SignalRow>
            ))}
            <CursorLine />
          </RowList>
          <BlackFill />
        </SignalPanel>

        <SignalPanel $w={75}>
          <BaselineBox />
          <ColumnHeader>
            <Tall text="Cursor" />
            <GearMenu />
          </ColumnHeader>
          <RowList>
            {SIGNALS.map((s) => (
              <SignalRow key={s.name}>
                <ValueCell><Tall text="1" /></ValueCell>
              </SignalRow>
            ))}
          </RowList>
          <BlackFill />
        </SignalPanel>

        <Waveforms />
        <ScrollColumn>
          <ScrollHead><ScrollUp /></ScrollHead>
        </ScrollColumn>
      </Workspace>
    </Body>
  </Page>
);

export default App;
